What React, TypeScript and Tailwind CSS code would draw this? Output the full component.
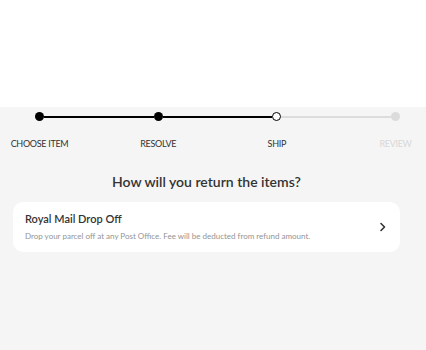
import React from 'react';

interface Step {
  label: string;
  state: 'done' | 'current' | 'todo';
}

const steps: Step[] = [
  { label: 'Choose item', state: 'done' },
  { label: 'Resolve', state: 'done' },
  { label: 'Ship', state: 'current' },
  { label: 'Review', state: 'todo' },
];

function Dot({ state }: { state: Step['state'] }) {
  if (state === 'current') {
    return <div className="h-[9px] w-[9px] shrink-0 rounded-full border-[1.5px] border-black bg-white" />;
  }
  if (state === 'todo') {
    return <div className="h-[9px] w-[9px] shrink-0 rounded-full bg-[#dcdcdc]" />;
  }
  return <div className="h-[9px] w-[9px] shrink-0 rounded-full bg-black" />;
}

export default function App() {
  return (
    <div className="flex h-[350px] w-full flex-col bg-white font-['Lato',sans-serif]">
      <div className="h-[107px] shrink-0 bg-white" />
      <div className="flex flex-1 flex-col bg-[#f5f5f5]">
        {/* stepper */}
        <div className="flex items-start pl-[35px] pr-[26px] pt-[5px]">
          {steps.map((step, i) => (
            <React.Fragment key={step.label}>
              <div className="flex w-[9px] shrink-0 flex-col items-center">
                <Dot state={step.state} />
                <span
                  className={
                    'mt-[17px] whitespace-nowrap text-[9px] uppercase leading-[11px] tracking-[-0.3px] ' +
                    (step.state === 'todo' ? 'text-[#d8d8d8]' : 'text-[#333]')
                  }
                >
                  {step.label}
                </span>
              </div>
              {i < steps.length - 1 && (
                <div
                  className={
                    'mt-[3.5px] h-[2px] flex-1 ' +
                    (steps[i + 1].state === 'todo' ? 'bg-[#dcdcdc]' : 'bg-black')
                  }
                />
              )}
            </React.Fragment>
          ))}
        </div>

        <div className="ml-[13px] mr-[26px] flex flex-col">
          <h2 className="mt-[23px] text-center text-[14px] font-semibold leading-[20px] text-[#333]">
            How will you return the items?
          </h2>

          <button
            type="button"
            className="mt-[10px] flex items-center justify-between rounded-[10px] bg-white pb-[10px] pl-[12px] pr-[13px] pt-[9px] text-left"
          >
            <div className="flex flex-col">
              <span className="text-[11px] font-semibold leading-[16px] text-[#333]">Royal Mail Drop Off</span>
              <span className="mt-[4px] text-[8px] leading-[11px] text-[#949494]">
                Drop your parcel off at any Post Office. Fee will be deducted from refund amount.
              </span>
            </div>
            <svg width="8" height="10" viewBox="0 0 8 10" fill="none" className="shrink-0">
              <path d="M2 1.5L5.5 5L2 8.5" stroke="#333" strokeWidth="1.6" strokeLinecap="round" strokeLinejoin="round" />
            </svg>
          </button>
        </div>
      </div>
    </div>
  );
}
